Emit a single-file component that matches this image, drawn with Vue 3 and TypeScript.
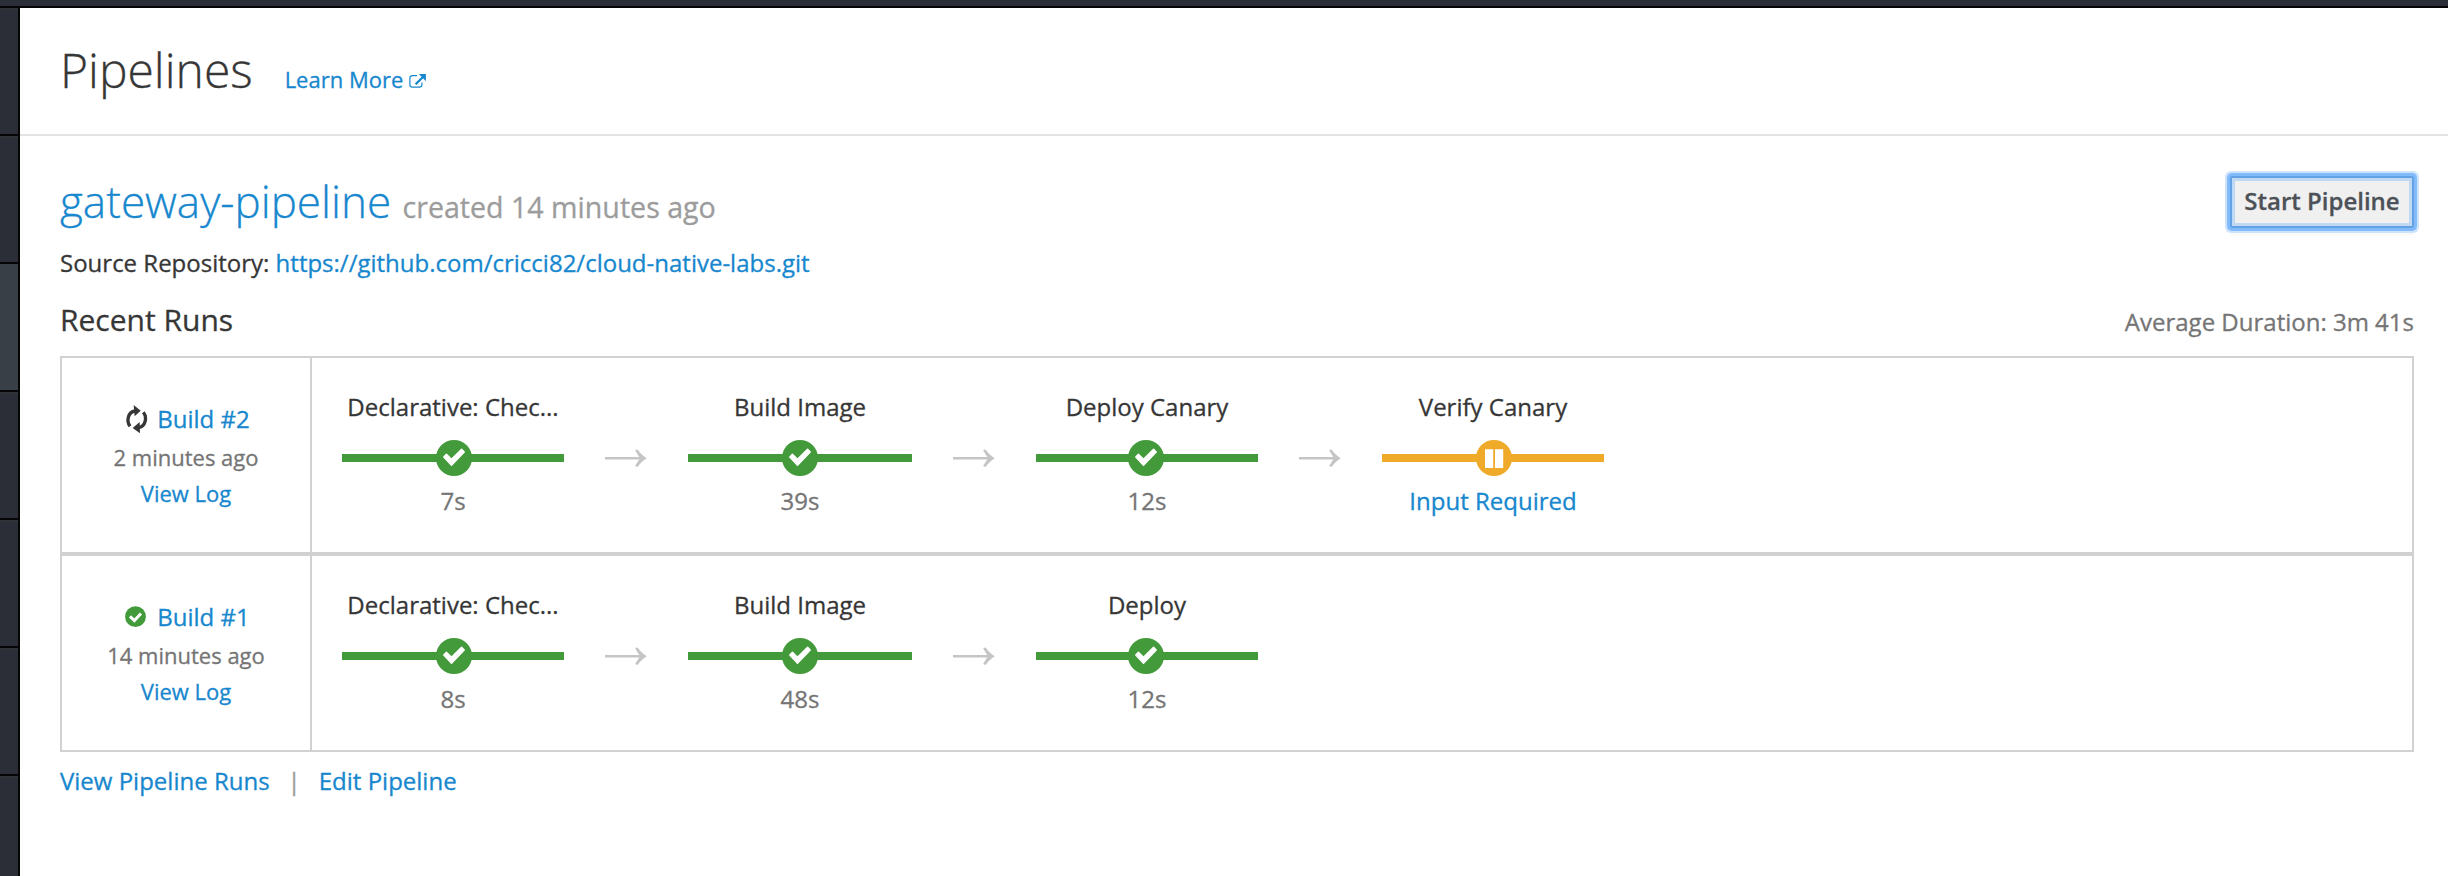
<script setup lang="ts">
type StageStatus = 'success' | 'paused'

interface Stage {
  name: string
  status: StageStatus
  duration?: string
}

interface Run {
  number: number
  status: 'running' | 'complete'
  age: string
  stages: Stage[]
}

const runs: Run[] = [
  {
    number: 2,
    status: 'running',
    age: '2 minutes ago',
    stages: [
      { name: 'Declarative: Chec...', status: 'success', duration: '7s' },
      { name: 'Build Image', status: 'success', duration: '39s' },
      { name: 'Deploy Canary', status: 'success', duration: '12s' },
      { name: 'Verify Canary', status: 'paused' },
    ],
  },
  {
    number: 1,
    status: 'complete',
    age: '14 minutes ago',
    stages: [
      { name: 'Declarative: Chec...', status: 'success', duration: '8s' },
      { name: 'Build Image', status: 'success', duration: '48s' },
      { name: 'Deploy', status: 'success', duration: '12s' },
    ],
  },
]

const navItems = [0, 1, 2, 3, 4, 5, 6]
const activeNav = 2
</script>

<template>
  <div class="page">
    <div class="topbar"></div>
    <div class="body">
      <nav class="sidebar">
        <div
          v-for="item in navItems"
          :key="item"
          class="nav-item"
          :class="{ active: item === activeNav }"
        ></div>
      </nav>

      <main class="main">
        <header class="page-header">
          <h1>Pipelines</h1>
          <a class="learn-more">
            <span>Learn More</span>
            <svg class="external" viewBox="0 0 17 14" width="17" height="14">
              <path
                d="M8 1.7H3.4Q.9 1.7.9 4V10.8Q.9 13.2 3.4 13.2H10.4Q12.9 13.2 12.9 10.8V8.4"
                fill="none"
                stroke="currentColor"
                stroke-width="1.2"
              />
              <path d="M9.9 0H16.9V7.2Z" fill="currentColor" />
              <path d="M14 3L6.6 10.2" stroke="currentColor" stroke-width="2.3" />
            </svg>
          </a>
        </header>

        <section class="pipeline">
          <div class="title-row">
            <h2><a>gateway-pipeline</a> <small>created 14 minutes ago</small></h2>
            <button class="start" type="button">Start Pipeline</button>
          </div>
          <p class="source">
            Source Repository: <a>https://github.com/cricci82/cloud-native-labs.git</a>
          </p>
          <div class="runs-heading">
            <h3>Recent Runs</h3>
            <span class="average">Average Duration: 3m 41s</span>
          </div>

          <div class="runs">
            <article v-for="run in runs" :key="run.number" class="run">
              <div class="build">
                <div class="build-name">
                  <svg
                    v-if="run.status === 'running'"
                    class="sync"
                    viewBox="39 14 78 90"
                    width="26"
                    height="30"
                  >
                    <path d="M63 81C52 66 56 38 78 35" />
                    <path d="M103 39C115 54 110 82 88 85" />
                    <path class="head" d="M74 17L95 34L77 51Z" />
                    <path class="head" d="M92 68L71 86L93 102Z" />
                  </svg>
                  <svg v-else viewBox="0 0 26 30" width="26" height="30">
                    <circle cx="13.5" cy="14.7" r="10.4" fill="#439a3a" />
                    <path
                      d="M8 14.4L12.4 18.6L19 11.6"
                      fill="none"
                      stroke="#fff"
                      stroke-width="2.9"
                    />
                  </svg>
                  <a>Build #{{ run.number }}</a>
                </div>
                <div class="age">{{ run.age }}</div>
                <a class="log">View Log</a>
              </div>

              <div class="stages">
                <template v-for="(stage, i) in run.stages" :key="stage.name">
                  <div v-if="i > 0" class="arrow">
                    <svg viewBox="0 0 42 18" width="42" height="18">
                      <path d="M0 9.2H37" stroke="#c5c5c5" stroke-width="2.6" />
                      <path
                        d="M30.2 1.6C31 .3 32.1 0 33 1C35.5 4.4 38 6.8 41.8 9.2C38 11.6 35.5 14 33 17.4C32.1 18.2 31 17.9 30.2 16.8L35 9.2Z"
                        fill="#c5c5c5"
                      />
                    </svg>
                  </div>
                  <div class="stage" :class="stage.status">
                    <div class="stage-name">{{ stage.name }}</div>
                    <div class="track">
                      <svg class="badge" viewBox="0 0 36 36" width="36" height="36">
                        <circle cx="18" cy="18" r="18" fill="currentColor" />
                        <path
                          v-if="stage.status === 'success'"
                          d="M7.8 17L10.4 14.4L15.5 19.3L25.6 9.4L28.2 12L15.5 25.3Z"
                          fill="#fff"
                          stroke="#fff"
                          stroke-width="1.5"
                          stroke-linejoin="round"
                        />
                        <path v-else d="M9 9.3H17.2V28H9ZM19 9.3H27.2V28H19Z" fill="#fff" />
                      </svg>
                    </div>
                    <div v-if="stage.duration" class="duration">{{ stage.duration }}</div>
                    <a v-else>Input Required</a>
                  </div>
                </template>
              </div>
            </article>
          </div>

          <footer class="links">
            <a>View Pipeline Runs</a>
            <span class="divider">|</span>
            <a>Edit Pipeline</a>
          </footer>
        </section>
      </main>
    </div>
  </div>
</template>

<style>
body {
  margin: 0;
  background: #fff;
}
</style>

<style scoped>
.page {
  display: flex;
  flex-direction: column;
  height: 876px;
  overflow: hidden;
  background: #fff;
  color: #363636;
  font-family: 'Open Sans', 'Noto Sans', sans-serif;
  font-size: 24px;
  line-height: 34px;
  -webkit-text-stroke: 0.3px currentColor;
}

.topbar {
  flex: none;
  height: 6px;
  background: #2b2e37;
  border-bottom: 2px solid #050505;
}

.body {
  display: flex;
  flex: 1;
  min-height: 0;
}

.sidebar {
  flex: none;
  width: 18px;
  overflow: hidden;
  background: #2b2e37;
  border-right: 2px solid #050505;
}

.nav-item {
  box-sizing: border-box;
  height: 128px;
  border-top: 2px solid #303439;
  border-bottom: 2px solid #050505;
}

.nav-item.active {
  background: #393f46;
  border-top-color: #393f46;
}

.main {
  flex: 1;
  min-width: 0;
}

h1,
h2,
h3,
p {
  margin: 0;
}

a {
  color: #1787ce;
  text-decoration: none;
}

.page-header {
  box-sizing: border-box;
  display: flex;
  align-items: baseline;
  gap: 32px;
  height: 128px;
  padding: 35px 0 0 40px;
  border-bottom: 2px solid #e3e3e3;
}

h1 {
  font-size: 48px;
  font-weight: 300;
  line-height: 54px;
}

.learn-more {
  display: flex;
  align-items: baseline;
  gap: 6px;
  font-size: 22px;
}

.pipeline {
  padding: 40px 34px 0 40px;
}

.title-row {
  display: flex;
  justify-content: space-between;
  height: 50px;
}

h2 {
  font-size: 44px;
  font-weight: 300;
  line-height: 50px;
}

h2 small {
  color: #9c9c9c;
  font-size: 28.6px;
  font-weight: 400;
}

.start {
  box-sizing: border-box;
  width: 184px;
  height: 52px;
  padding: 0 0 3px;
  border: 2px solid #64a2e4;
  border-radius: 2px;
  background: #f0f0f0;
  box-shadow:
    inset 0 0 0 3px #bfd9f4,
    0 0 0 3px #82bbfb,
    0 0 0 5px #cfe4fb,
    0 7px 4px rgba(0, 0, 0, 0.04);
  color: #4d5258;
  font: 600 24px/34px 'Open Sans', 'Noto Sans', sans-serif;
  white-space: nowrap;
}

.source {
  margin-top: 20px;
}

.runs-heading {
  display: flex;
  align-items: baseline;
  justify-content: space-between;
  margin-top: 20px;
}

h3 {
  font-size: 30px;
  font-weight: 400;
  line-height: 40px;
}

.average,
.age,
.duration {
  color: #757575;
}

.runs {
  margin-top: 16px;
  border: 2px solid #d1d1d1;
}

.run {
  display: flex;
  height: 194px;
}

.run + .run {
  border-top: 4px solid #d1d1d1;
}

.build {
  box-sizing: border-box;
  flex: none;
  display: flex;
  flex-direction: column;
  align-items: center;
  width: 250px;
  padding-top: 41px;
  border-right: 2px solid #d1d1d1;
}

.build-name {
  display: flex;
  align-items: center;
  gap: 9px;
  height: 40px;
}

.sync {
  fill: none;
  stroke: #363636;
  stroke-width: 10;
}

.sync .head {
  fill: #363636;
  stroke: none;
}

.age,
.log {
  font-size: 22px;
  line-height: 36px;
}

.stages {
  display: flex;
  padding: 32px 0 0 30px;
}

.stage {
  width: 222px;
  text-align: center;
  white-space: nowrap;
}

.stage:nth-child(3) {
  width: 224px;
}

.success {
  --status: #439a3a;
}

.paused {
  --status: #efaa29;
}

.track {
  display: flex;
  height: 36px;
  margin: 16px 0 8px;
  padding-left: 94px;
  background: linear-gradient(var(--status), var(--status)) 0 14px / 100% 8px no-repeat;
  color: var(--status);
}

.stage:nth-child(5) .track {
  padding-left: 92px;
}

.arrow {
  display: flex;
  justify-content: center;
  width: 124px;
  padding-top: 59px;
}

.links {
  display: flex;
  gap: 18px;
  margin-top: 12px;
}

.divider {
  color: #999;
}
</style>
